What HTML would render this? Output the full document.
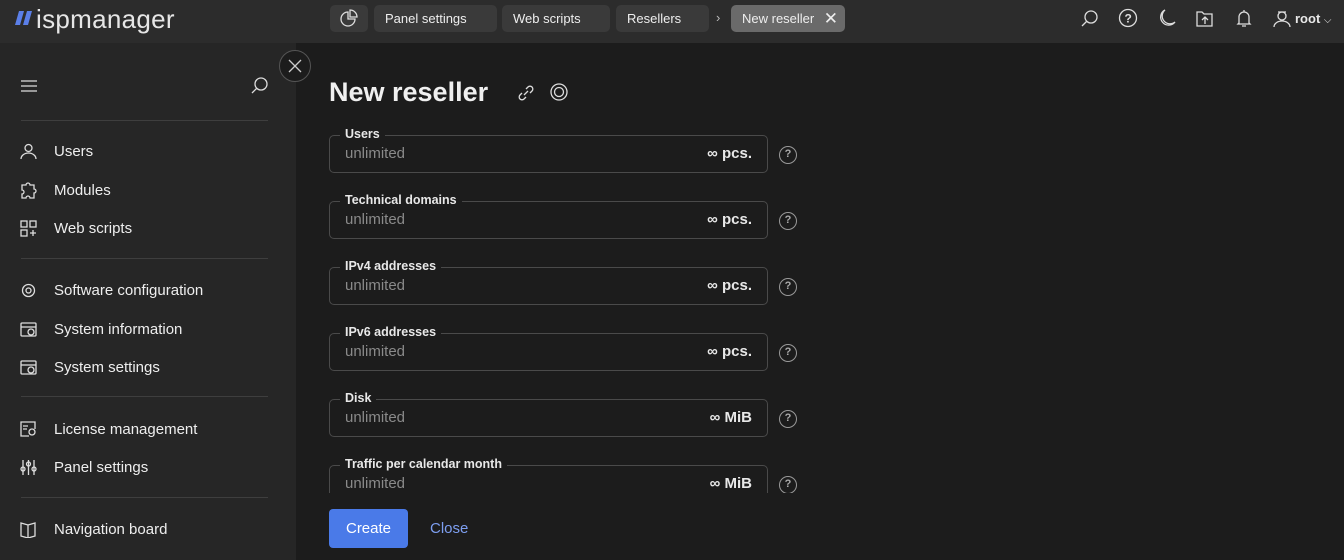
<!DOCTYPE html>
<html><head><meta charset="utf-8"><style>
*{box-sizing:border-box;margin:0;padding:0}
body{width:1344px;height:560px;overflow:hidden;background:#1c1c1c;font-family:"Liberation Sans",sans-serif;color:#e8e8e8;position:relative}
.hdr{position:absolute;left:0;top:0;width:1344px;height:43px;background:#2c2c2c}
.logo{position:absolute;left:36px;top:4px;font-size:26px;color:#e6e6e6;letter-spacing:0.3px}
.slash{position:absolute;left:15px;top:11px}
.crumb{position:absolute;top:5px;height:27px;border-radius:5px;background:#3a3a3a;font-size:13px;line-height:27px;padding-left:11px;color:#eee}
.side{position:absolute;left:0;top:43px;width:296px;height:517px;background:#262626}
.item{position:absolute;left:20px;font-size:15px;color:#eee;display:flex;align-items:center}
.item svg{margin-right:17px}
.sep{position:absolute;left:21px;width:247px;height:1px;background:#3e3e3e}
.field{position:absolute;left:329px;width:439px;height:38px;border:1px solid #4a4a4a;border-radius:5px}
.field .lb{position:absolute;left:10px;top:-9px;background:#1c1c1c;padding:0 5px;font-size:12.5px;color:#e8e8e8;font-weight:bold}
.field .v{position:absolute;left:15px;top:9px;font-size:15px;color:#8a8a8a}
.field .u{position:absolute;right:15px;top:9px;font-size:15px;color:#e8e8e8;font-weight:bold}
.q{position:absolute;left:779px;width:18px;height:18px;border:1.5px solid #999;border-radius:50%;font-size:11px;color:#aaa;text-align:center;line-height:15px;font-weight:bold}
svg{stroke:#ddd;fill:none;stroke-width:1.3}
</style></head><body>
<div class="hdr">
<svg class="slash" width="20" height="14" style="stroke:none"><path d="M4 0h5L5 14H0z M12 0h5l-4 14H8z" fill="#5b7fe8"/></svg>
<div class="logo">ispmanager</div>
<div class="crumb" style="left:330px;width:38px;padding:0"><svg width="38" height="27" viewBox="0 0 38 27"><path d="M18 7a7 7 0 1 0 7 7h-7z"/><path d="M20 5v7h7a7 7 0 0 0-7-7z"/></svg></div>
<div class="crumb" style="left:374px;width:123px">Panel settings</div>
<div class="crumb" style="left:502px;width:108px">Web scripts</div>
<div class="crumb" style="left:616px;width:93px">Resellers</div>
<div style="position:absolute;left:716px;top:10px;font-size:13px;color:#bbb">›</div>
<div class="crumb" style="left:731px;width:114px;background:#6a6a6a">New reseller <span style="position:absolute;right:7px;top:0;font-size:17px">✕</span></div>
<svg style="position:absolute;left:1080px;top:9px" width="20" height="20"><circle cx="11" cy="8" r="6"/><path d="M7 12l-5 5"/></svg>
<svg style="position:absolute;left:1118px;top:8px" width="20" height="20"><circle cx="10" cy="10" r="8.5"/><text x="6.5" y="14.5" fill="#ddd" stroke="none" font-size="12" font-weight="bold" font-family="Liberation Sans">?</text></svg>
<svg style="position:absolute;left:1157px;top:8px" width="20" height="20"><path d="M8 2a8 8 0 1 0 10 12A7 7 0 0 1 8 2z"/></svg>
<svg style="position:absolute;left:1195px;top:8px" width="20" height="20"><path d="M2 4h5l2 2h8v12H2z"/><path d="M10 16v-7M7 12l3-3 3 3"/></svg>
<svg style="position:absolute;left:1234px;top:8px" width="20" height="20"><path d="M5 15V9a5 5 0 0 1 10 0v6l1 1H4zM10 2v2M8 18h4"/></svg>
<svg style="position:absolute;left:1272px;top:8px" width="20" height="20"><circle cx="10" cy="8" r="4"/><path d="M6 4h8M2 19a8 6 0 0 1 16 0"/></svg>
<div style="position:absolute;left:1295px;top:11px;font-size:13px;font-weight:bold">root <span style="font-weight:normal;font-size:10px">⌵</span></div>
</div>
<div class="side">
<svg style="position:absolute;left:20px;top:36px" width="18" height="14"><path d="M1 2h16M1 7h16M1 12h16"/></svg>
<svg style="position:absolute;left:250px;top:33px" width="20" height="20"><circle cx="11" cy="8" r="6"/><path d="M7 12l-5 5"/></svg>
<div class="sep" style="top:77px"></div>
<div class="item" style="top:100px"><svg width="17" height="17"><circle cx="8.5" cy="5" r="3.5"/><path d="M1 16a7.5 6 0 0 1 15 0"/></svg>Users</div>
<div class="item" style="top:139px"><svg width="17" height="17"><path d="M2 3h4a2 2 0 0 1 4 0h4v4a2 2 0 0 1 0 4v5H10a2 2 0 0 0-4 0H2v-4a2 2 0 0 0 0-4z"/></svg>Modules</div>
<div class="item" style="top:177px"><svg width="17" height="17"><rect x="1" y="1" width="6" height="6"/><rect x="10" y="1" width="6" height="6"/><rect x="1" y="10" width="6" height="6"/><path d="M13 10v6M10 13h6"/></svg>Web scripts</div>
<div class="sep" style="top:215px"></div>
<div class="item" style="top:239px"><svg width="17" height="17"><circle cx="8.5" cy="8.5" r="6"/><circle cx="8.5" cy="8.5" r="2.5"/></svg>Software configuration</div>
<div class="item" style="top:278px"><svg width="17" height="17"><rect x="1" y="2" width="15" height="13" rx="1"/><path d="M1 6h15"/><circle cx="11" cy="11" r="3"/></svg>System information</div>
<div class="item" style="top:316px"><svg width="17" height="17"><rect x="1" y="2" width="15" height="13" rx="1"/><path d="M1 6h15"/><circle cx="11" cy="11" r="3"/></svg>System settings</div>
<div class="sep" style="top:353px"></div>
<div class="item" style="top:378px"><svg width="17" height="17"><path d="M9 15H1V1h14v7"/><circle cx="12" cy="11" r="3"/><path d="M3 5h5M3 8h4"/></svg>License management</div>
<div class="item" style="top:416px"><svg width="17" height="17"><path d="M3 1v15M8.5 1v15M14 1v15"/><circle cx="3" cy="10" r="2"/><circle cx="8.5" cy="5" r="2"/><circle cx="14" cy="10" r="2"/></svg>Panel settings</div>
<div class="sep" style="top:454px"></div>
<div class="item" style="top:478px"><svg width="17" height="17"><path d="M1 2l7 2 7-2v13l-7 2-7-2zM8 4v13"/></svg>Navigation board</div>
</div>
<div style="position:absolute;left:279px;top:50px;width:32px;height:32px;border-radius:50%;background:#1c1c1c;border:1px solid #555"><svg width="30" height="30" style="stroke:#ccc"><path d="M9 9l12 12M21 9L9 21"/></svg></div>
<div style="position:absolute;left:329px;top:77px;font-size:27px;font-weight:bold;color:#f0f0f0">New reseller</div>
<svg style="position:absolute;left:516px;top:83px" width="20" height="20"><path d="M8 12l4-4M6 10l-2 2a2.5 2.5 0 0 0 4 4l2-2M14 10l2-2a2.5 2.5 0 0 0-4-4l-2 2"/></svg>
<svg style="position:absolute;left:549px;top:82px" width="20" height="20"><circle cx="10" cy="10" r="8"/><circle cx="10" cy="10" r="4.5"/></svg>
<div style="position:absolute;left:296px;top:493px;width:600px;height:67px;background:#1c1c1c;z-index:2"></div>
<div class="field" style="top:135px"><span class="lb">Users</span><span class="v">unlimited</span><span class="u">∞ pcs.</span></div><div class="q" style="top:146px">?</div>
<div class="field" style="top:201px"><span class="lb">Technical domains</span><span class="v">unlimited</span><span class="u">∞ pcs.</span></div><div class="q" style="top:212px">?</div>
<div class="field" style="top:267px"><span class="lb">IPv4 addresses</span><span class="v">unlimited</span><span class="u">∞ pcs.</span></div><div class="q" style="top:278px">?</div>
<div class="field" style="top:333px"><span class="lb">IPv6 addresses</span><span class="v">unlimited</span><span class="u">∞ pcs.</span></div><div class="q" style="top:344px">?</div>
<div class="field" style="top:399px"><span class="lb">Disk</span><span class="v">unlimited</span><span class="u">∞ MiB</span></div><div class="q" style="top:410px">?</div>
<div class="field" style="top:465px"><span class="lb">Traffic per calendar month</span><span class="v">unlimited</span><span class="u">∞ MiB</span></div><div class="q" style="top:476px">?</div>
<div style="position:absolute;z-index:3;left:329px;top:509px;width:79px;height:39px;border-radius:4px;background:#4a7ae8;color:#fff;font-size:15px;text-align:center;line-height:39px">Create</div>
<div style="position:absolute;z-index:3;left:430px;top:520px;font-size:15px;color:#7d9ef0">Close</div>
</body></html>
